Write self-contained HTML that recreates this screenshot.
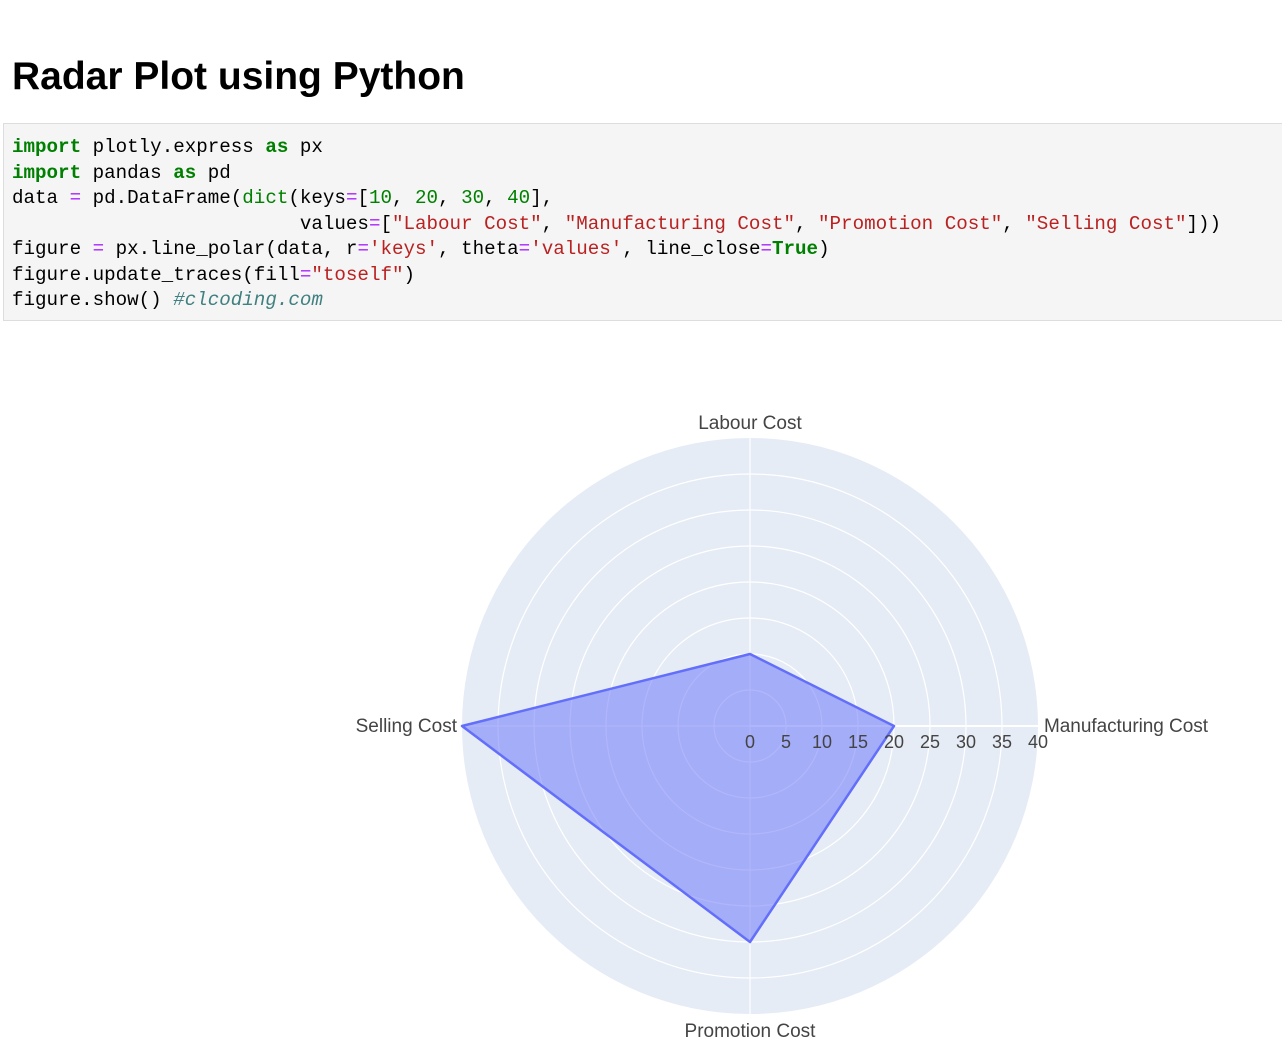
<!DOCTYPE html>
<html><head><meta charset="utf-8"><style>
body{margin:0;background:#fff;width:1282px;height:1054px;overflow:hidden;position:relative;font-family:"Liberation Sans",sans-serif}
h1{position:absolute;left:12px;top:55px;margin:0;font-size:39px;font-weight:bold;color:#000}
pre{position:absolute;left:3px;top:123px;width:1279px;height:198px;margin:0;background:#f5f5f5;border:1px solid #ddd;border-right:none;box-sizing:border-box;padding:11px 8px;font-family:"Liberation Mono",monospace;font-size:19.2px;line-height:25.5px;color:#000}
.k{color:#008000;font-weight:bold}.o{color:#aa22ff}.s{color:#ba2121}.n{color:#008000}.b{color:#008000}.c{color:#408080;font-style:italic}
</style></head><body>
<h1>Radar Plot using Python</h1>
<pre><span class="k">import</span> plotly.express <span class="k">as</span> px
<span class="k">import</span> pandas <span class="k">as</span> pd
data <span class="o">=</span> pd.DataFrame(<span class="b">dict</span>(keys<span class="o">=</span>[<span class="n">10</span>, <span class="n">20</span>, <span class="n">30</span>, <span class="n">40</span>],
                         values<span class="o">=</span>[<span class="s">"Labour Cost"</span>, <span class="s">"Manufacturing Cost"</span>, <span class="s">"Promotion Cost"</span>, <span class="s">"Selling Cost"</span>]))
figure <span class="o">=</span> px.line_polar(data, r<span class="o">=</span><span class="s">'keys'</span>, theta<span class="o">=</span><span class="s">'values'</span>, line_close<span class="o">=</span><span class="k">True</span>)
figure.update_traces(fill<span class="o">=</span><span class="s">"toself"</span>)
figure.show() <span class="c">#clcoding.com</span></pre>
<svg width="1282" height="1054" style="position:absolute;left:0;top:0" font-family="Liberation Sans, sans-serif">
<circle cx="750" cy="726" r="288" fill="#e5ecf6"/>
<g fill="none" stroke="#fff" stroke-width="1.2">
<circle cx="750" cy="726" r="36"/><circle cx="750" cy="726" r="72"/><circle cx="750" cy="726" r="108"/><circle cx="750" cy="726" r="144"/><circle cx="750" cy="726" r="180"/><circle cx="750" cy="726" r="216"/><circle cx="750" cy="726" r="252"/>
<line x1="750" y1="438" x2="750" y2="1014"/><line x1="462" y1="726" x2="1038" y2="726"/>
</g>
<line x1="750" y1="726" x2="1038" y2="726" stroke="#fff" stroke-width="2"/>
<polygon points="750,654 894,726 750,942 462,726" fill="rgba(99,110,250,0.5)" stroke="#636efa" stroke-width="2.5" stroke-linejoin="round"/>
<g fill="#444" font-size="18" text-anchor="middle">
<text x="750" y="748">0</text><text x="786" y="748">5</text><text x="822" y="748">10</text><text x="858" y="748">15</text><text x="894" y="748">20</text><text x="930" y="748">25</text><text x="966" y="748">30</text><text x="1002" y="748">35</text><text x="1038" y="748">40</text>
</g>
<g fill="#444" font-size="19" text-anchor="middle">
<text x="750" y="429">Labour Cost</text>
<text x="750" y="1037">Promotion Cost</text>
<text x="1044" y="732" text-anchor="start" textLength="164">Manufacturing Cost</text>
<text x="457" y="732" text-anchor="end">Selling Cost</text>
</g>
</svg>
</body></html>
